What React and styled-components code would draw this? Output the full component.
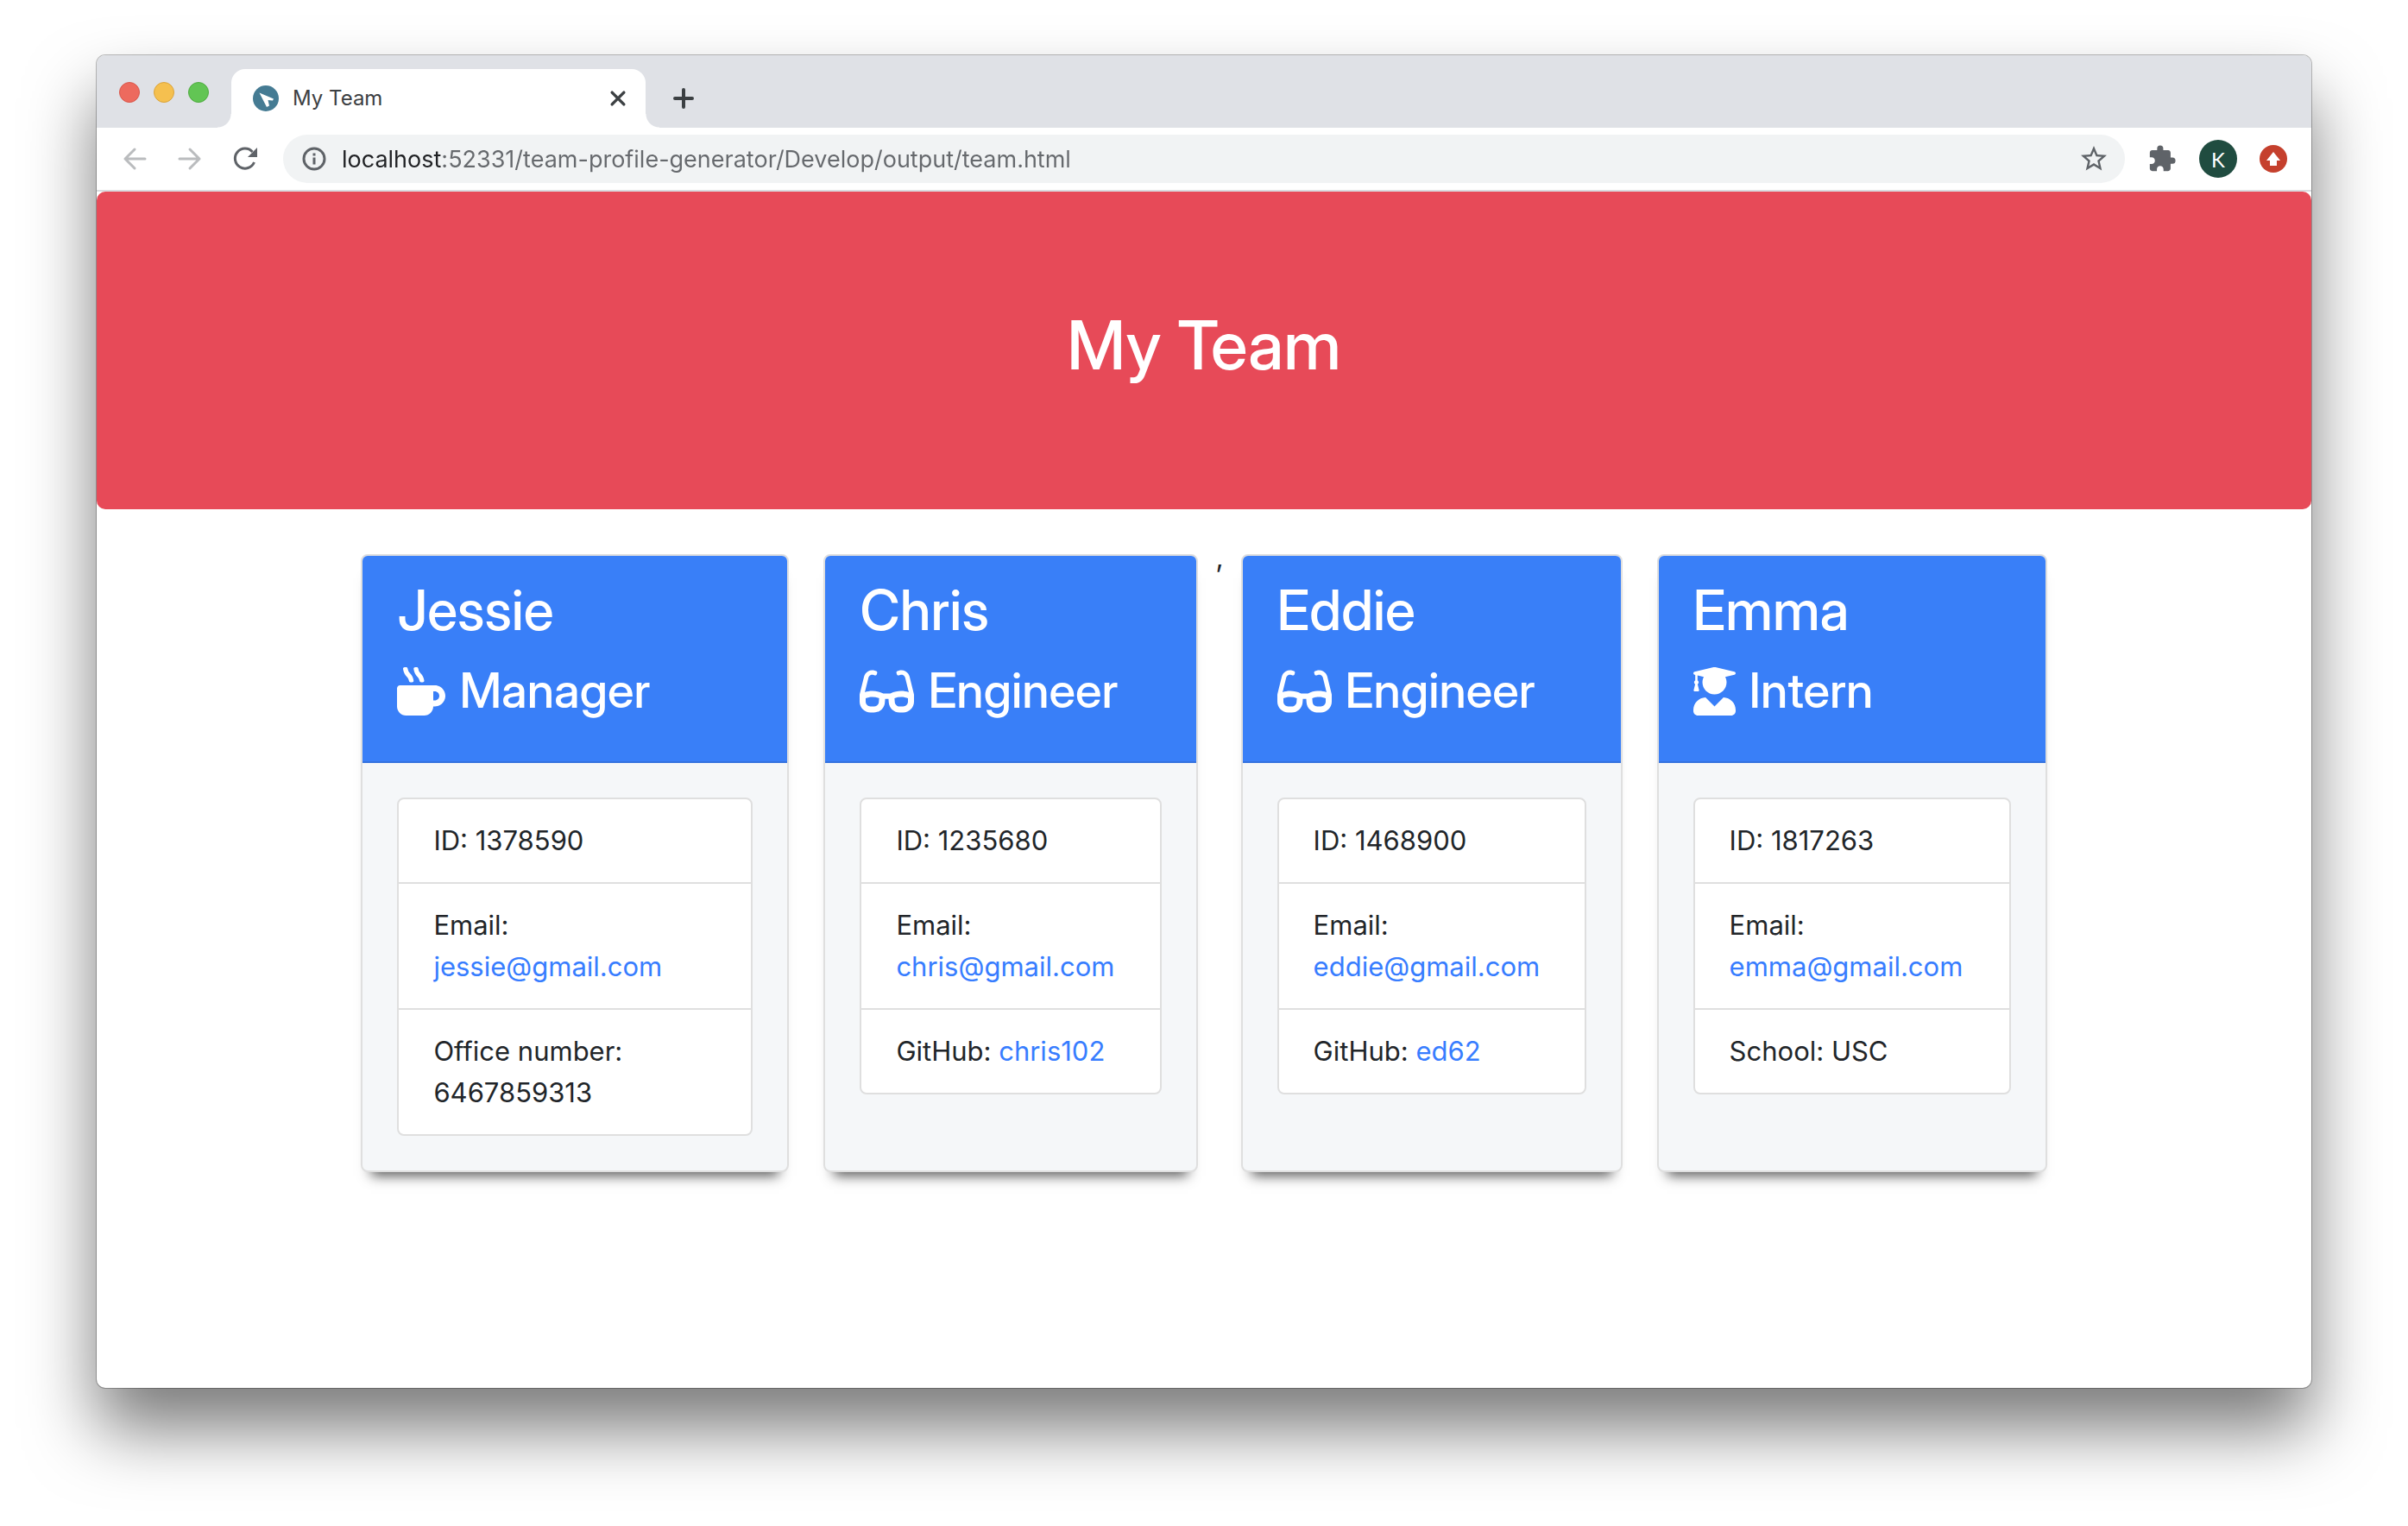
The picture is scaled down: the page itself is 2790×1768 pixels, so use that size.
import React from "react";
import styled, { createGlobalStyle } from "styled-components";
import { FaMugHot, FaGlasses, FaUserGraduate } from "react-icons/fa";
import { MdExtension, MdStarBorder } from "react-icons/md";

const GlobalStyle = createGlobalStyle`
  *, *::before, *::after { box-sizing: border-box; }
  body {
    margin: 0;
    background: #fff;
    color: #212529;
    font-family: Inter, "Liberation Sans", sans-serif;
    font-size: 32px;
    line-height: 48px;
  }
  h1, h2, h3 {
    font-family: "Inter Display", Inter, "Liberation Sans", sans-serif;
    font-weight: 500;
  }
  h1, h2, h3, ul { margin: 0; padding: 0; }
  svg { display: block; flex: none; }
`;

const Desktop = styled.div`
  display: flex;
  min-height: 100vh;
  padding: 64px 112px 160px;
`;

const Window = styled.div`
  display: flex;
  flex-direction: column;
  flex: 1;
  min-width: 0;
  overflow: hidden;
  border-radius: 10px;
  background: #fff;
  box-shadow: 0 0 0 1px rgba(0, 0, 0, 0.26), 0 48px 80px rgba(0, 0, 0, 0.52);
`;

const TabStrip = styled.div`
  display: flex;
  align-items: flex-end;
  height: 84px;
  background: #dfe1e6;
`;

const Lights = styled.div`
  display: flex;
  gap: 16px;
  align-self: center;
  padding: 2px 26px 0;
`;

const Light = styled.button`
  width: 24px;
  height: 24px;
  padding: 0;
  border: 1px solid ${(p) => p.$edge};
  border-radius: 50%;
  background: ${(p) => p.$fill};
`;

const Tab = styled.div`
  position: relative;
  display: flex;
  align-items: center;
  width: 480px;
  height: 68px;
  padding: 0 20px 0 25px;
  border-radius: 16px 16px 0 0;
  background: #fff;
  color: #3c4043;
  font-size: 24px;

  &::before,
  &::after {
    content: "";
    position: absolute;
    bottom: 0;
    width: 16px;
    height: 16px;
  }
  &::before {
    right: 100%;
    background: radial-gradient(circle at 0 0, transparent 15px, #fff 16px);
  }
  &::after {
    left: 100%;
    background: radial-gradient(circle at 100% 0, transparent 15px, #fff 16px);
  }
`;

const TabTitle = styled.span`
  flex: 1;
  padding-left: 16px;
`;

const IconButton = styled.button`
  display: grid;
  place-items: center;
  flex: none;
  width: ${(p) => p.$size || 24}px;
  height: ${(p) => p.$size || 24}px;
  padding: 0;
  border: 0;
  border-radius: 50%;
  background: ${(p) => p.$fill || "none"};
  color: ${(p) => p.$color || "#5f6368"};
  font: 24px Lato, "Liberation Sans", sans-serif;
`;

const NewTab = styled.div`
  display: flex;
  align-items: center;
  height: 68px;
  padding-left: 30px;
`;

const Toolbar = styled.div`
  display: flex;
  align-items: center;
  height: 74px;
  padding: 0 28px;
  border-bottom: 2px solid #dadce0;
`;

const NavButtons = styled.div`
  display: flex;
  gap: 32px;
  padding-right: 28px;
`;

const AddressBar = styled.form`
  display: flex;
  align-items: center;
  flex: 1;
  height: 56px;
  padding: 0 18px 0 20px;
  border-radius: 28px;
  background: #f1f3f4;
`;

const AddressInput = styled.input`
  flex: 1;
  min-width: 0;
  height: 40px;
  margin: 0 16px;
  padding: 0;
  border: 0;
  outline: 0;
  background: linear-gradient(90deg, #202124 116px, #66696d 116px);
  background-clip: text;
  -webkit-background-clip: text;
  -webkit-text-fill-color: transparent;
  font: 27px Inter, "Liberation Sans", sans-serif;
`;

const Extensions = styled.div`
  display: flex;
  align-items: center;
  gap: 26px;
  padding-left: 26px;
`;

const Banner = styled.header`
  padding: 130px 64px 142px;
  border-radius: 10px;
  background: #e74a58;
  color: #fff;
  text-align: center;
`;

const Title = styled.h1`
  font-size: 78px;
  line-height: 96px;
`;

const Team = styled.main`
  display: flex;
  justify-content: center;
  padding: 32px 64px 64px;
`;

const Card = styled.article`
  display: flex;
  flex-direction: column;
  flex: 0 1 ${(p) => p.$width}px;
  margin: 20px;
  border: 2px solid #dfdfdf;
  border-radius: 8px;
  background: #f5f7f9;
  box-shadow: 0 16px 14px -12px rgba(0, 0, 0, 0.68);
`;

const CardHeader = styled.div`
  display: grid;
  gap: 22px;
  padding: 24px 40px 48px;
  border-bottom: 2px solid #3472df;
  border-radius: 6px 6px 0 0;
  background: #397ff8;
  color: #fff;
`;

const Name = styled.h2`
  font-size: 64px;
  line-height: 77px;
`;

const Role = styled.h3`
  display: flex;
  align-items: center;
  gap: 16px;
  font-size: 56px;
  line-height: 67px;

  svg {
    width: ${(p) => p.$iconWidth}px;
    height: 56px;
  }
`;

const Details = styled.ul`
  margin: 40px;
  border: 2px solid #dfdfdf;
  border-radius: 8px;
  background: #fff;
  list-style: none;
`;

const Detail = styled.li`
  padding: 24px 40px;
  font-size: 31px;

  & + & {
    border-top: 2px solid #dfdfdf;
  }
`;

const Link = styled.a`
  color: #377dff;
  text-decoration: none;
`;

const Compass = () => (
  <svg width="30" height="30" viewBox="0 0 30 30">
    <circle cx="15" cy="15" r="15" fill="#457b93" />
    <path
      d="M7.500 8.500 24 15.500 23 17.500 17.500 17 19 23.500 16 25Z"
      fill="#fff"
    />
  </svg>
);

const Stroke = ({ d, width = 3, size = 28 }) => (
  <svg
    width={size}
    height={size}
    viewBox="0 0 28 28"
    fill="none"
    stroke="currentColor"
    strokeWidth={width}
    strokeLinecap="round"
    strokeLinejoin="round"
  >
    <path d={d} />
  </svg>
);

const Reload = () => (
  <svg width="32" height="32" viewBox="0 0 32 32">
    <path
      d="M26.500 20A11.500 11.500 0 1 1 24.500 8"
      fill="none"
      stroke="currentColor"
      strokeWidth="3"
    />
    <path d="M30 3V14H19Z" fill="currentColor" />
  </svg>
);

const Info = () => (
  <svg width="32" height="32" viewBox="0 0 32 32" fill="#5f6368">
    <circle cx="16" cy="16" r="12" fill="none" stroke="#5f6368" strokeWidth="3" />
    <path d="M14.500 14.500h3v8h-3zM14.500 9.500h3v3h-3z" />
  </svg>
);

const UpArrow = () => (
  <svg width="32" height="32" viewBox="0 0 32 32">
    <path d="M16 8 24 18H20V24H12V18H8Z" fill="#fff" />
  </svg>
);

const team = [
  {
    name: "Jessie",
    role: "Manager",
    Icon: FaMugHot,
    iconWidth: 56,
    id: "1378590",
    email: "jessie@gmail.com",
    extra: "Office number:",
    value: "6467859313",
    width: 496,
  },
  {
    name: "Chris",
    role: "Engineer",
    Icon: FaGlasses,
    iconWidth: 63,
    id: "1235680",
    email: "chris@gmail.com",
    extra: "GitHub:",
    value: "chris102",
    href: "https://github.com/chris102",
    width: 434,
    after: ",",
  },
  {
    name: "Eddie",
    role: "Engineer",
    Icon: FaGlasses,
    iconWidth: 63,
    id: "1468900",
    email: "eddie@gmail.com",
    extra: "GitHub:",
    value: "ed62",
    href: "https://github.com/ed62",
    width: 442,
  },
  {
    name: "Emma",
    role: "Intern",
    Icon: FaUserGraduate,
    iconWidth: 49,
    id: "1817263",
    email: "emma@gmail.com",
    extra: "School:",
    value: "USC",
    width: 452,
  },
];

const MemberCard = ({ member }) => {
  const { name, role, Icon, iconWidth, id, email, extra, value, href, width } =
    member;
  return (
    <Card $width={width}>
      <CardHeader>
        <Name>{name}</Name>
        <Role $iconWidth={iconWidth}>
          <Icon aria-hidden="true" />
          {role}
        </Role>
      </CardHeader>
      <Details>
        <Detail>ID: {id}</Detail>
        <Detail>
          Email: <Link href={`mailto:${email}`}>{email}</Link>
        </Detail>
        <Detail>
          {extra} {href ? <Link href={href}>{value}</Link> : value}
        </Detail>
      </Details>
    </Card>
  );
};

export default function App() {
  return (
    <Desktop>
      <GlobalStyle />
      <Window>
        <TabStrip>
          <Lights>
            <Light aria-label="Close" $fill="#ed6a5e" $edge="#d9584c" />
            <Light aria-label="Minimize" $fill="#f5c04f" $edge="#dba43c" />
            <Light aria-label="Zoom" $fill="#62c554" $edge="#4fab40" />
          </Lights>
          <Tab>
            <Compass />
            <TabTitle>My Team</TabTitle>
            <IconButton aria-label="Close tab" $color="#3c4043">
              <Stroke d="M6 6 22 22M22 6 6 22" size={24} width={4} />
            </IconButton>
          </Tab>
          <NewTab>
            <IconButton aria-label="New tab" $size={28} $color="#3c4043">
              <Stroke d="M14 4V24M4 14H24" width={4} />
            </IconButton>
          </NewTab>
        </TabStrip>
        <Toolbar>
          <NavButtons>
            <IconButton aria-label="Back" $size={32} $color="#babcbe">
              <Stroke d="M26 14H3M14 3 3 14 14 25" />
            </IconButton>
            <IconButton aria-label="Forward" $size={32} $color="#babcbe">
              <Stroke d="M2 14H25M14 3 25 14 14 25" />
            </IconButton>
            <IconButton aria-label="Reload" $size={32}>
              <Reload />
            </IconButton>
          </NavButtons>
          <AddressBar>
            <Info />
            <AddressInput
              aria-label="Address"
              defaultValue="localhost:52331/team-profile-generator/Develop/output/team.html"
            />
            <IconButton type="button" aria-label="Bookmark" $size={36}>
              <MdStarBorder size={36} />
            </IconButton>
          </AddressBar>
          <Extensions>
            <IconButton aria-label="Extensions" $size={34}>
              <MdExtension size={34} />
            </IconButton>
            <IconButton aria-label="Profile" $size={44} $fill="#204c40" $color="#fff">
              K
            </IconButton>
            <IconButton aria-label="Update" $size={32} $fill="#c5402d">
              <UpArrow />
            </IconButton>
          </Extensions>
        </Toolbar>
        <Banner>
          <Title>My Team</Title>
        </Banner>
        <Team>
          {team.map((member) => (
            <React.Fragment key={member.name}>
              <MemberCard member={member} />
              {member.after}
            </React.Fragment>
          ))}
        </Team>
      </Window>
    </Desktop>
  );
}
